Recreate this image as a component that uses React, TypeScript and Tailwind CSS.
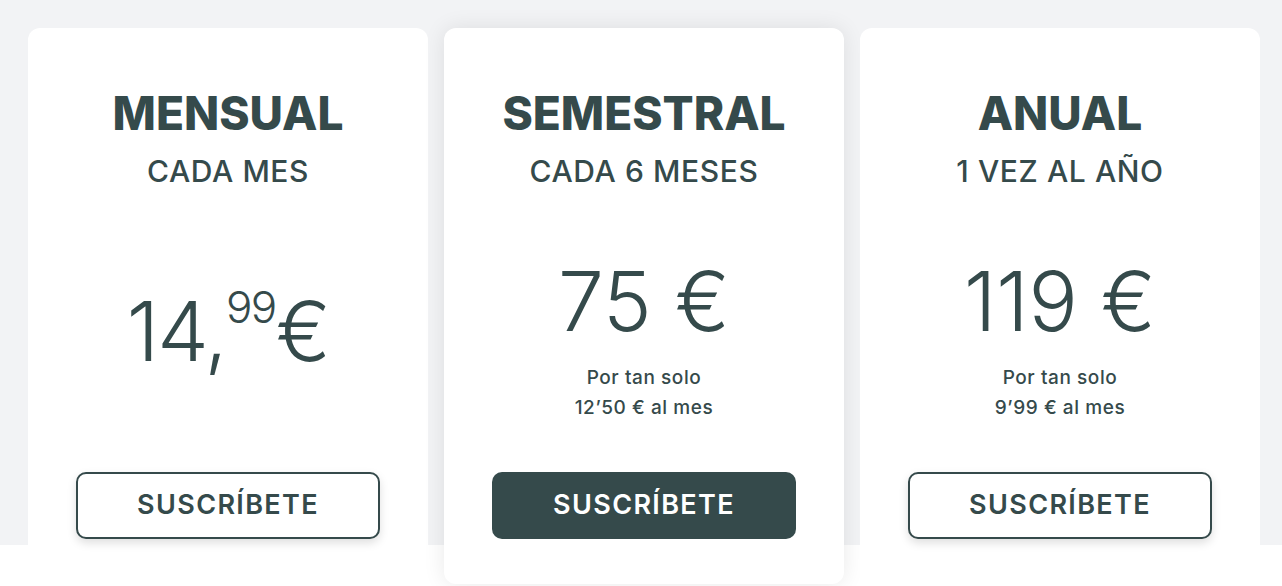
const font = 'font-["Inter","Liberation_Sans",sans-serif]';

type Plan = {
  title: string;
  period: string;
  featured?: boolean;
  gap: string;
  price: React.ReactNode;
  note?: string[];
};

const plans: Plan[] = [
  {
    title: 'MENSUAL',
    period: 'CADA MES',
    gap: 'mt-[99px]',
    price: (
      <div className="flex items-start text-[82px] font-light leading-none tracking-[-0.02em]">
        <span className="mt-[6px]">14,</span>
        <span className="text-[44px] leading-none">99</span>
        <span className="mt-[6px]">€</span>
      </div>
    ),
  },
  {
    title: 'SEMESTRAL',
    period: 'CADA 6 MESES',
    featured: true,
    gap: 'mt-[75px]',
    price: <div className="text-[82px] font-light leading-none">75 €</div>,
    note: ['Por tan solo', '12’50 € al mes'],
  },
  {
    title: 'ANUAL',
    period: '1 VEZ AL AÑO',
    gap: 'mt-[75px]',
    price: <div className="text-[82px] font-light leading-none">119 €</div>,
    note: ['Por tan solo', '9’99 € al mes'],
  },
];

function PlanCard({ plan }: { plan: Plan }) {
  return (
    <div
      className={`flex h-[556px] w-[400px] flex-col items-center rounded-xl bg-white pt-[62px] pb-[45px] ${
        plan.featured ? 'shadow-[0_0_22px_rgba(0,0,0,0.09)]' : ''
      }`}
    >
      <h2 className="text-[46px] font-extrabold leading-none">{plan.title}</h2>
      <p className="mt-[20px] text-[30px] font-medium leading-none tracking-[0.02em]">{plan.period}</p>

      <div className={`flex flex-col items-center ${plan.gap}`}>
        {plan.price}
        {plan.note && (
          <div className="mt-[20px] text-center text-[19px] font-medium leading-[30px] tracking-[0.03em]">
            {plan.note.map((line) => (
              <div key={line}>{line}</div>
            ))}
          </div>
        )}
      </div>

      <button
        className={`mt-auto flex h-[67px] w-[304px] items-center justify-center rounded-[10px] text-[27px] font-semibold tracking-[0.05em] ${
          plan.featured
            ? 'bg-[#354a4b] text-white'
            : 'border-2 border-[#354a4b] bg-white shadow-[0_4px_10px_rgba(0,0,0,0.13)]'
        }`}
      >
        SUSCRÍBETE
      </button>
    </div>
  );
}

export default function App() {
  return (
    <div
      className={`${font} min-h-[586px] w-[1282px] bg-[linear-gradient(to_bottom,#f2f3f5_545px,#ffffff_545px)] text-[#354a4b]`}
    >
      <div className="flex gap-4 pl-[28px] pt-[28px]">
        {plans.map((p) => (
          <PlanCard key={p.title} plan={p} />
        ))}
      </div>
    </div>
  );
}
